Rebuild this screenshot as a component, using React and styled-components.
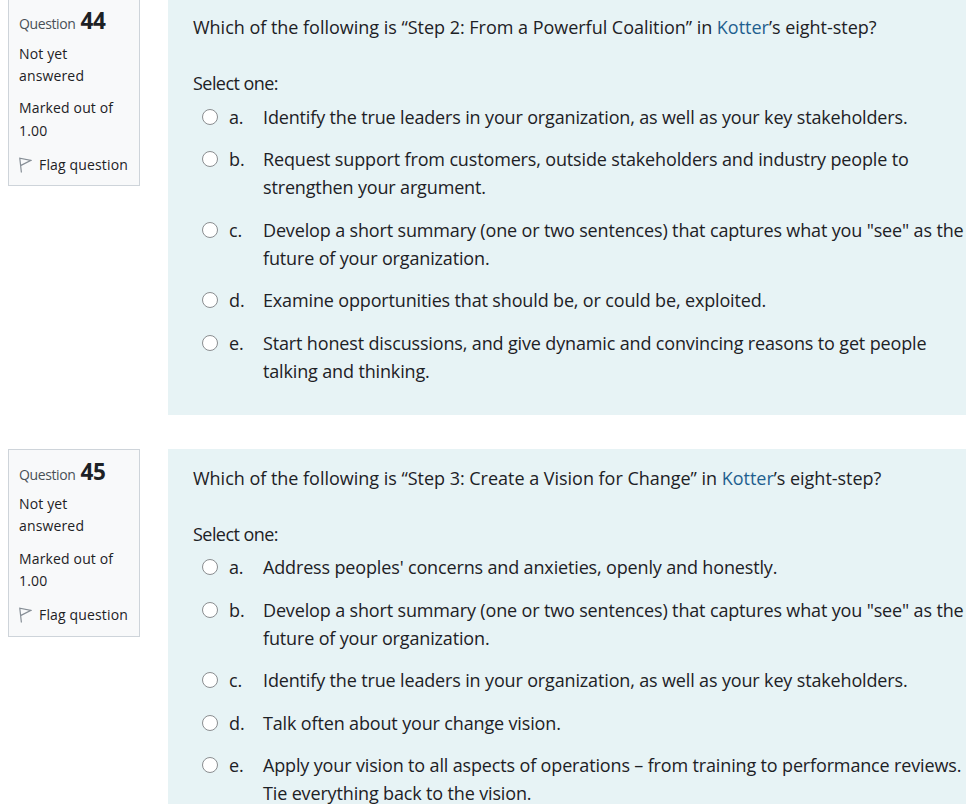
import React from 'react';
import styled, { createGlobalStyle } from 'styled-components';

const GlobalStyle = createGlobalStyle`
  html, body {
    margin: 0;
    padding: 0;
    background: #ffffff;
    overflow: hidden;
    height: 804px;
  }
  body {
    font-family: "Open Sans", "Noto Sans", sans-serif;
    color: #1d2125;
  }
`;

const Page = styled.div`
  width: 966px;
  height: 804px;
  overflow: hidden;
  padding: 0 0 0 8px;
  box-sizing: border-box;
`;

const QuestionList = styled.div`
  margin-top: -1.5px;
  display: flex;
  flex-direction: column;
  gap: 34px;
`;

const Question = styled.section`
  display: flex;
  align-items: flex-start;
  gap: 28px;
`;

const Info = styled.aside`
  flex: 0 0 132px;
  box-sizing: border-box;
  height: 187.5px;
  padding: 8.5px 10px 0;
  background: #f8f9fa;
  border: 1px solid #ced4da;
  font-size: 14px;
  line-height: 22.4px;
  letter-spacing: 0.15px;
`;

const QuestionNo = styled.h3`
  margin: 0 0 5.5px;
  font-size: 14px;
  font-weight: 400;
  line-height: 26px;
  color: #495057;
  letter-spacing: -0.4px;
`;

const Num = styled.span`
  margin-left: 2px;
  font-size: 22.5px;
  font-weight: 700;
  letter-spacing: -0.4px;
  color: #1d2125;
`;

const State = styled.div`
  margin-bottom: 10px;
`;

const Flag = styled.div`
  display: flex;
  align-items: center;
  gap: 7px;
  margin-top: 11.5px;
`;

const Content = styled.div`
  flex: 0 0 810px;
  box-sizing: border-box;
  padding: 14.7px 0 0 25px;
  background: #e7f3f5;
  height: 416.5px;
  font-size: 18px;
  line-height: 28px;
  letter-spacing: -0.15px;
  white-space: nowrap;
`;

const Prompt = styled.p`
  margin: 0 0 28px;
  letter-spacing: -0.02px;
`;

const KotterLink = styled.span`
  color: #1f5f8f;
`;

const SelectOne = styled.div`
  margin-bottom: 5.5px;
  letter-spacing: -0.55px;
`;

const Answer = styled.div`
  display: flex;
  align-items: flex-start;
  margin-bottom: 14.5px;
`;

const Radio = styled.span`
  flex: 0 0 16px;
  box-sizing: border-box;
  width: 16px;
  height: 16px;
  margin: 6px 0 0 9px;
  border: 1.5px solid #8a8d90;
  border-radius: 50%;
  background: #ffffff;
`;

const Letter = styled.span`
  flex: 0 0 34px;
  margin-left: 11px;
`;

const AnswerText = styled.span`
  display: block;
`;

const FlagIcon = () => (
  <svg width="13" height="16" viewBox="0 0 13 16" fill="none" stroke="#868e96" strokeWidth="1.2">
    <path d="M2.4 15.5 L0.8 1.2 L12 3.4 L2 8.4" />
  </svg>
);

const questions = [
  {
    no: 44,
    before: '“Step 2: From a Powerful Coalition”',
    answers: [
      ['Identify the true leaders in your organization, as well as your key stakeholders.'],
      ['Request support from customers, outside stakeholders and industry people to', 'strengthen your argument.'],
      ['Develop a short summary (one or two sentences) that captures what you "see" as the', 'future of your organization.'],
      ['Examine opportunities that should be, or could be, exploited.'],
      ['Start honest discussions, and give dynamic and convincing reasons to get people', 'talking and thinking.'],
    ],
  },
  {
    no: 45,
    before: '“Step 3: Create a Vision for Change”',
    answers: [
      ["Address peoples' concerns and anxieties, openly and honestly."],
      ['Develop a short summary (one or two sentences) that captures what you "see" as the', 'future of your organization.'],
      ['Identify the true leaders in your organization, as well as your key stakeholders.'],
      ['Talk often about your change vision.'],
      ['Apply your vision to all aspects of operations – from training to performance reviews.', 'Tie everything back to the vision.'],
    ],
  },
];

export default function App() {
  return (
    <>
      <GlobalStyle />
      <Page>
        <QuestionList>
          {questions.map(q => (
            <Question key={q.no}>
              <Info>
                <QuestionNo>Question <Num>{q.no}</Num></QuestionNo>
                <State>Not yet<br />answered</State>
                <State>Marked out of<br />1.00</State>
                <Flag><FlagIcon />Flag question</Flag>
              </Info>
              <Content>
                <Prompt>Which of the following is {q.before} in <KotterLink>Kotter</KotterLink>’s eight-step?</Prompt>
                <SelectOne>Select one:</SelectOne>
                {q.answers.map((lines, i) => (
                  <Answer key={i}>
                    <Radio />
                    <Letter>{'abcde'[i]}.</Letter>
                    <AnswerText>
                      {lines.map(l => <div key={l}>{l}</div>)}
                    </AnswerText>
                  </Answer>
                ))}
              </Content>
            </Question>
          ))}
        </QuestionList>
      </Page>
    </>
  );
}
